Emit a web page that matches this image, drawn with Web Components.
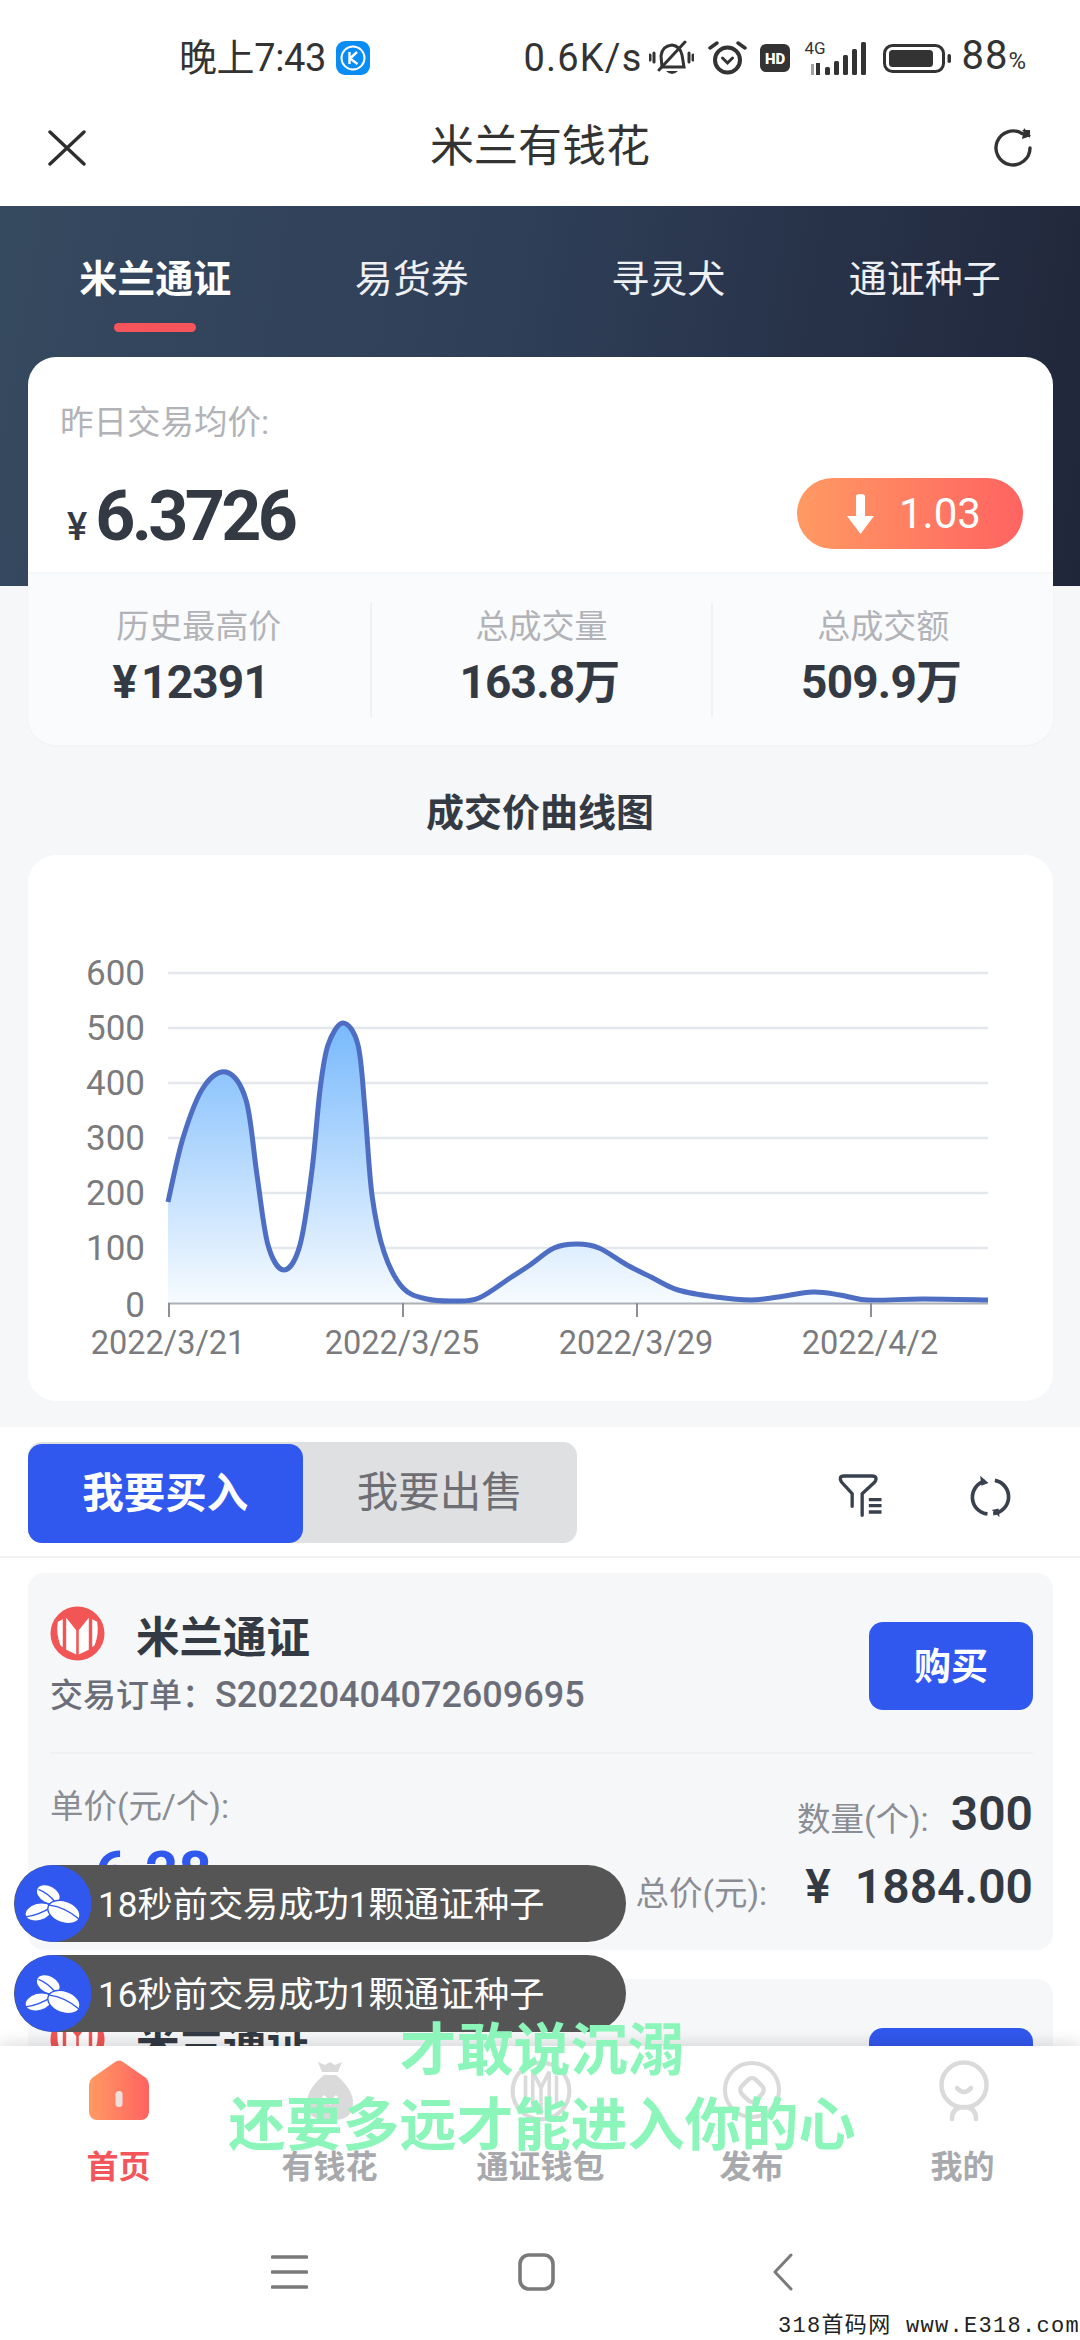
<!DOCTYPE html>
<html lang="zh-CN"><head><meta charset="utf-8"><title>米兰有钱花</title>
<style>
html,body{margin:0;padding:0}
body{width:1080px;height:2340px;overflow:hidden;position:relative;display:flex;flex-direction:column;background:#fff;font-family:Roboto,"Noto Sans CJK SC",sans-serif;color:#343a44}
</style></head><body>
<status-bar></status-bar>
<title-bar>米兰有钱花</title-bar>
<scroll-area>
  <market-tabs>
    <market-tab active>米兰通证</market-tab><market-tab>易货券</market-tab><market-tab>寻灵犬</market-tab><market-tab>通证种子</market-tab>
  </market-tabs>
  <price-card>
    <stat-cell shift><span slot="label">历史最高价</span><span slot="value">¥ 12391</span></stat-cell>
    <stat-cell divided><span slot="label">总成交量</span><span slot="value">163.8万</span></stat-cell>
    <stat-cell divided><span slot="label">总成交额</span><span slot="value">509.9万</span></stat-cell>
  </price-card>
  <section-title>成交价曲线图</section-title>
  <chart-card></chart-card>
  <trade-toolbar></trade-toolbar>
  <order-list>
    <order-card order="S20220404072609695" price="6.28" qty="300" total="1884.00"></order-card>
    <order-card order="S20220404072609695" price="6.28" qty="300" total="1884.00"></order-card>
  </order-list>
</scroll-area>
<tab-bar>
  <tab-item active label="首页" icon="home"></tab-item>
  <tab-item label="有钱花" icon="bag"></tab-item>
  <tab-item label="通证钱包" icon="milan"></tab-item>
  <tab-item label="发布" icon="publish"></tab-item>
  <tab-item label="我的" icon="me"></tab-item>
</tab-bar>
<nav-bar></nav-bar>
<toast-stack>
  <toast-pill>18秒前交易成功1颗通证种子</toast-pill>
  <toast-pill>16秒前交易成功1颗通证种子</toast-pill>
</toast-stack>
<lyric-mark><div>才敢说沉溺</div><div>还要多远才能进入你的心</div></lyric-mark>
<site-mark>318首码网 www.E318.com</site-mark>
<script>
const def=(name,css,html)=>customElements.define(name,class extends HTMLElement{
  constructor(){super();this.attachShadow({mode:'open'}).innerHTML=`<style>${css}</style>${typeof html==='function'?html(this):html}`;}
  connectedCallback(){
    if(typeof html==='function'&&!this._r){this._r=1;this.shadowRoot.innerHTML=`<style>${css}</style>${html(this)}`;}
  }
});
const logoStripes=`M20 28 L25 25.5 V54 L22.5 52 Q18 40 20 28Z M28.5 24 L38.7 36.7 V61.5 L28.5 56.5Z M41.3 36.7 L51.5 24 V56.5 L41.3 61.5Z M55 25.5 L60 28 Q62 40 57.5 52 L55 54Z`;
const bean=`<g stroke="#3158ee" stroke-width="1.4"><ellipse cx="37" cy="34" rx="13" ry="9" fill="#fff" transform="rotate(28 37 34)"/><path d="M27 29 Q37 33 44 42" fill="none"/>
<ellipse cx="27" cy="52" rx="14" ry="9" fill="#fff" transform="rotate(-15 27 52)"/><path d="M14 57 Q28 55 40 47" fill="none"/>
<ellipse cx="53" cy="52" rx="17" ry="11" fill="#fff" transform="rotate(20 53 52)"/><path d="M38 45 Q54 47 68 59" fill="none"/></g>`;

def('status-bar',`:host{display:flex;align-items:center;height:64px;padding:26px 53px 0 179px;box-sizing:content-box;color:#333;flex:none}
.t{font-size:38px;line-height:64px;letter-spacing:-.4px;white-space:nowrap}
.k{margin-left:10px;width:34px;height:34px}
.r{margin-left:auto;display:flex;align-items:center}
.s{font-size:38px;letter-spacing:1.2px;white-space:nowrap;line-height:64px}
svg{display:block;flex:none}
.p{font-size:40px;letter-spacing:1px;white-space:nowrap;margin-left:9px;line-height:64px}.p small{font-size:24px}
.g{font-size:17px;position:absolute;left:0;top:-4px;line-height:20px}
.sig{position:relative;width:65px;height:33px;margin-left:14px}`,
`<span class="t">晚上7:43</span>
<svg class="k" viewBox="0 0 34 34"><rect width="34" height="34" rx="9" fill="#0a8cf5"/><circle cx="17" cy="17" r="11.5" fill="none" stroke="#fff" stroke-width="2"/><path d="M13.5 11 V23 M21 11 L14 17.5 L21.5 23" fill="none" stroke="#fff" stroke-width="2.4"/></svg>
<div class="r"><span class="s">0.6K/s</span>
<svg style="margin-left:7px" width="45" height="36" viewBox="0 0 45 36"><g fill="none" stroke="#333" stroke-width="3" stroke-linecap="round"><path d="M13 27 L12 16 Q13 6 23 5 Q31 6 33 15 L35 27 Z"/><path d="M10 30 L36 2"/><path d="M5 13 V22 M1 15 V20 M40 13 V22 M44 15 V20"/></g><path d="M17 31 H29 Q23 37 17 31Z" fill="#333"/></svg>
<svg style="margin-left:14px" width="39" height="34" viewBox="0 0 39 34"><g fill="none" stroke="#333" stroke-linecap="round"><circle cx="19.5" cy="19" r="12.5" stroke-width="4"/><path d="M2 7 L9 2 M37 7 L30 2" stroke-width="3.4"/><path d="M14.5 17 L19.5 22 L24.5 17" stroke-width="3"/></g></svg>
<svg style="margin-left:13px" width="30" height="28" viewBox="0 0 30 28"><rect width="30" height="28" rx="6" fill="#333"/><text x="15" y="19.5" font-size="15" font-weight="900" text-anchor="middle" fill="#fff" font-family="Roboto">HD</text></svg>
<div class="sig"><span class="g">4G</span><svg width="65" height="33" viewBox="0 0 65 33"><g fill="#333"><rect x="7" y="22" width="3" height="11" opacity=".45"/><rect x="12" y="21" width="4" height="12"/><rect x="21" y="25" width="5" height="8" rx="1.5"/><rect x="30" y="19" width="5" height="14" rx="1.5"/><rect x="39" y="13" width="5" height="20" rx="1.5"/><rect x="48" y="7" width="5" height="26" rx="1.5"/><rect x="57" y="0" width="5" height="33" rx="1.5"/></g></svg></div>
<svg style="margin-left:14px" width="69" height="29" viewBox="0 0 69 29"><rect x="1.5" y="1.5" width="59" height="26" rx="8" fill="none" stroke="#333" stroke-width="3"/><rect x="6" y="6" width="44" height="17" rx="3.5" fill="#333"/><rect x="64.5" y="10" width="3.5" height="9" rx="1.7" fill="#333"/></svg>
<span class="p">88<small>%</small></span></div>`);

def('title-bar',`:host{display:flex;align-items:center;justify-content:center;position:relative;height:106px;padding-bottom:10px;font-size:44px;color:#333;flex:none;background:#fff}
svg{position:absolute;display:block}`,
`<svg style="left:48px;top:40px" width="38" height="36" viewBox="0 0 38 36"><path d="M2 2 L36 34 M36 2 L2 34" stroke="#2e2e2e" stroke-width="3.4" stroke-linecap="round"/></svg>
<slot></slot>
<svg style="left:994px;top:38px" width="40" height="40" viewBox="0 0 40 40"><path d="M36 20 A17 17 0 1 1 28 5.5" fill="none" stroke="#333" stroke-width="3.4" stroke-linecap="round"/><path d="M30 0 L37 8 L28 11 Z M28 2 L36 2 L36 10" fill="#333"/></svg>`);

def('scroll-area',`:host{display:block;flex:1;min-height:0;overflow:hidden;background:#f6f7f9}`,`<slot></slot>`);

def('market-tabs',`:host{display:grid;grid-template-columns:repeat(4,1fr);align-content:start;height:380px;box-sizing:border-box;padding:46px 27px 0;background:linear-gradient(100deg,#35495f 0%,#2f3f58 45%,#20263a 100%)}`,`<slot></slot>`);
def('market-tab',`:host{display:flex;flex-direction:column;align-items:center;color:#eef0f4;font-size:38px;line-height:54px}
:host([active]){color:#fff;font-weight:700}
i{display:block;width:82px;height:9px;border-radius:5px;margin-top:17px;background:transparent}
:host([active]) i{background:#f4545a}`,`<slot></slot><i></i>`);

def('price-card',`:host{display:block;margin:-229px 27px 0 28px;border-radius:28px;overflow:hidden;position:relative;background:#fff;box-shadow:0 1px 3px rgba(0,0,0,.03)}
.top{height:217px;box-sizing:border-box;padding:46px 30px 0 32px;border-bottom:2px solid #f6f7f9}
.lab{font-size:33.5px;line-height:40px;color:#b1b3b8}
.row{display:flex;align-items:center;justify-content:space-between;margin-top:35px;height:71px;padding-left:7px}
.price{display:flex;align-items:baseline;color:#343a44;padding-top:6px}
.price small{font-size:38px;margin-right:8px;font-weight:500}
.price b{font-size:70px;letter-spacing:-3.7px;font-weight:700;line-height:71px}
.badge{display:flex;align-items:center;width:226px;height:71px;box-sizing:border-box;padding-left:49px;border-radius:36px;background:linear-gradient(90deg,#ff9a63,#ff6361);color:#fff;font-size:42px}
.badge svg{margin-right:24px;display:block}
.stats{display:grid;grid-template-columns:repeat(3,1fr);background:#fafbfc;height:171px;box-sizing:border-box;padding-top:29px;align-items:start}`,
`<div class="top"><div class="lab">昨日交易均价:</div>
<div class="row"><div class="price"><small>¥</small><b>6.3726</b></div>
<div class="badge"><svg width="29" height="40" viewBox="0 0 29 40"><path d="M10 2 Q10 0 14.5 0 Q19 0 19 2 V22 H28 L14.5 40 L1 22 H10Z" fill="#fff"/></svg><span>1.03</span></div></div></div>
<div class="stats"><slot></slot></div>`);
def('stat-cell',`:host{display:flex;flex-direction:column;align-items:center;height:114px;box-sizing:border-box}
:host([divided]){border-left:2px solid #f0f1f3}
.l{font-size:33px;line-height:48px;color:#b1b3b8}
.v{font-size:46px;line-height:62px;font-weight:700;color:#343a44;letter-spacing:-.8px;padding-right:4px;white-space:nowrap}
:host([shift]) .v{padding-right:16px;word-spacing:-6px}`,
`<div class="l"><slot name="label"></slot></div><div class="v"><slot name="value"></slot></div>`);

def('section-title',`:host{display:block;text-align:center;font-size:38px;font-weight:700;line-height:50px;padding:43px 0 17px;color:#343a44}`,`<slot></slot>`);

def('chart-card',`:host{display:block;margin:0 27px 26px 28px;height:546px;border-radius:28px;background:#fff;overflow:hidden}
svg{display:block}text{font-family:Roboto,sans-serif;font-size:32.5px;fill:#7b7b7e}.y{font-size:35px}`,()=>{
  const pts=[[168,1202],[183,1138],[203,1088],[226,1072],[246,1100],[257,1175],[268,1245],[284,1270],[300,1245],[312,1170],[320,1090],[328,1045],[343,1023],[358,1045],[365,1110],[372,1195],[384,1252],[403,1288],[427,1299],[455,1301],[479,1298],[510,1278],[530,1265],[554,1248],[577,1244],[599,1248],[627,1265],[651,1277],[678,1290],[716,1297],[751,1300],[778,1297],[813,1292],[840,1295],[868,1300],[923,1299],[988,1300]];
  let d=`M${pts[0]}`;
  for(let i=0;i<pts.length-1;i++){
    const a=pts[Math.max(i-1,0)],b=pts[i],c=pts[i+1],e=pts[Math.min(i+2,pts.length-1)],k=6;
    d+=` C${b[0]+(c[0]-a[0])/k} ${b[1]+(c[1]-a[1])/k} ${c[0]-(e[0]-b[0])/k} ${c[1]-(e[1]-b[1])/k} ${c[0]} ${c[1]}`;
  }
  const ys=[[600,973],[500,1028],[400,1083],[300,1138],[200,1193],[100,1248]];
  return `<svg width="1025" height="546" viewBox="28 855 1025 546">
  <defs><linearGradient id="f" gradientUnits="userSpaceOnUse" x1="0" y1="1023" x2="0" y2="1303"><stop offset="0" stop-color="#78b9fc"/><stop offset="1" stop-color="#f7fbff"/></linearGradient></defs>
  ${ys.map(([v,y])=>`<line x1="168" x2="988" y1="${y}" y2="${y}" stroke="#e4e8ed" stroke-width="2.5"/><text class="y" x="145" y="${y+12}" text-anchor="end">${v}</text>`).join('')}
  <text class="y" x="145" y="1317" text-anchor="end">0</text>
  <path d="${d} L988 1303 L168 1303Z" fill="url(#f)"/>
  <line x1="168" x2="988" y1="1303.5" y2="1303.5" stroke="#adb0b4" stroke-width="2"/>
  ${[169,403,637,871].map(x=>`<line x1="${x}" x2="${x}" y1="1303" y2="1317" stroke="#8d9096" stroke-width="2"/>`).join('')}
  <path d="${d}" fill="none" stroke="#4e6ec3" stroke-width="5" stroke-linejoin="round"/>
  <text x="168" y="1354" text-anchor="middle">2022/3/21</text><text x="402" y="1354" text-anchor="middle">2022/3/25</text><text x="636" y="1354" text-anchor="middle">2022/3/29</text><text x="870" y="1354" text-anchor="middle">2022/4/2</text>
  </svg>`;});

def('trade-toolbar',`:host{display:flex;align-items:flex-start;background:#fff;height:131px;box-sizing:border-box;padding:15px 69px 0 28px;border-bottom:2px solid #f1f2f4}
.tg{display:flex;align-items:flex-end;width:549px;height:101px;background:#dfe0e2;border-radius:14px;font-size:41.5px}
.a,.b{display:flex;align-items:center;justify-content:center;width:275px;height:99px;box-sizing:border-box;padding-bottom:7px}
.a{background:#3158ee;color:#fff;font-weight:700;border-radius:14px}
.b{color:#6e6f74;height:101px}
.ic{margin-left:auto;display:flex;gap:85px;align-items:flex-start;padding-top:31px}
svg{display:block}`,
`<div class="tg"><div class="a">我要买入</div><div class="b">我要出售</div></div>
<div class="ic"><svg width="47" height="45" viewBox="55 38 140 135"><path d="M100 138 V100 L68 65 Q58 48 75 47 H160 Q178 48 168 65 L130 100 V165" fill="none" stroke="#38414d" stroke-width="10" stroke-linecap="round" stroke-linejoin="round"/><path d="M150 118 H188 M150 136 H188 M150 155 H188" stroke="#38414d" stroke-width="10"/></svg>
<svg width="42" height="47" viewBox="450 40 125 140"><g fill="none" stroke="#38414d" stroke-width="11"><path d="M497 64 A50 50 0 0 0 505 162"/><path d="M527 62 A50 50 0 0 1 522 161"/></g><path d="M483 48 L508 70 L487 78Z M541 172 L518 150 L538 146Z" fill="#38414d"/></svg></div>`);

def('order-list',`:host{display:flex;flex-direction:column;gap:29px;background:#fff;padding:15px 27px 0 28px}`,`<slot></slot>`);
def('order-card',`:host{display:block;flex:none;height:377px;background:#f6f7f9;border-radius:16px;padding:0 20px 0 22px;box-sizing:border-box}
.head{display:flex;justify-content:space-between;align-items:flex-start;height:179px;border-bottom:2px solid #f0f1f3;box-sizing:content-box}
.n{display:flex;align-items:flex-start;margin-top:33px}
.n svg{display:block;width:55px;height:55px;flex:none}
.n b{margin:8px 0 0 31px;font-size:43.5px;line-height:50px;color:#343a44}
.o{margin-top:9px;font-size:36px;line-height:44px;font-weight:500;color:#6b6e78;white-space:nowrap}
.o span{font-size:33px}
.btn{margin-top:49px;width:164px;height:88px;box-sizing:border-box;padding-bottom:4px;border-radius:14px;background:#3158ee;color:#fff;font-size:37px;font-weight:700;display:flex;align-items:center;justify-content:center}
.body{display:flex;justify-content:space-between;padding-top:22px}
.up{font-size:33.5px;line-height:44px;color:#8b8d94;margin-top:9px}
.pr{display:flex;align-items:baseline;color:#3158ee;font-weight:700;font-size:58px;line-height:70px;margin-top:8px}
.pr small{font-size:30px;width:45px}
.rt{display:flex;flex-direction:column;align-items:flex-end;padding-top:6px}
.q{display:flex;align-items:center;height:62px;margin-top:0}
.q span{font-size:33.5px;color:#8b8d94;margin:6px 22px 0 0}
.q b{font-size:48px;font-weight:600;color:#343a44}
.q+.q{margin-top:11px}.q+.q span{margin:8px 38px 0 0}
.q i{font-style:normal;font-size:48px;font-weight:600;margin-right:24px;color:#343a44}`,
h=>`<div class="head"><div><div class="n"><svg viewBox="12 12 56 56"><circle cx="40" cy="40" r="27.5" fill="#f25555"/><path fill="#fff" d="${logoStripes}"/></svg><b>米兰通证</b></div>
<div class="o"><span>交易订单&#xFF1A;</span>${h.getAttribute('order')||''}</div></div><div class="btn">购买</div></div>
<div class="body"><div><div class="up">单价(元/个):</div><div class="pr"><small>¥</small>${h.getAttribute('price')||''}</div></div>
<div class="rt"><div class="q"><span>数量(个):</span><b>${h.getAttribute('qty')||''}</b></div>
<div class="q"><span>总价(元):</span><i>¥</i><b>${h.getAttribute('total')||''}</b></div></div></div>`);

const tabIcons={
home:`<svg width="64" height="62" viewBox="-2 0 64 62"><defs><linearGradient id="h" x1="0" x2="1" y1="0" y2="0"><stop offset="0" stop-color="#ff9a63"/><stop offset="1" stop-color="#ff6361"/></linearGradient></defs><path d="M26 2 a6 6 0 0 1 8 0 L57 18 q3 3 3 7 V52 a8 8 0 0 1-8 8 H8 a8 8 0 0 1-8-8 V25 q0-4 3-7Z" fill="url(#h)"/><rect x="26.5" y="31" width="7" height="16" rx="3.5" fill="#f0e0dc"/></svg>`,
bag:`<svg width="64" height="62" viewBox="0 0 64 62"><path d="M20 2 L27 5 L32 2 L37 5 L44 2 L40 12 H24Z" fill="#dadada"/><path d="M26 15 H38 Q56 30 55 44 Q54 60 36 60 H28 Q10 60 9 44 Q8 30 26 15Z" fill="#dadada"/><path d="M25 36 L32 43 L39 36" fill="none" stroke="#fff" stroke-width="3"/></svg>`,
milan:`<svg width="64" height="62" viewBox="9 9 62 60"><circle cx="40" cy="39" r="27.5" fill="none" stroke="#dadada" stroke-width="4"/><path d="M25 24 V52 M32 20 V58 M40 36 V62 M48 20 V58 M55 24 V52 M32 20 L40 36 L48 20" fill="none" stroke="#dadada" stroke-width="3.5"/></svg>`,
publish:`<svg width="64" height="62" viewBox="0 0 64 62"><g fill="none" stroke="#dadada"><circle cx="32" cy="30" r="27" stroke-width="4"/><rect x="22" y="20" width="20" height="20" rx="6" stroke-width="4.5" transform="rotate(45 32 30)"/></g></svg>`,
me:`<svg width="64" height="62" viewBox="0 0 64 62"><g fill="none" stroke="#dadada" stroke-width="4.5" stroke-linecap="round"><circle cx="33" cy="25" r="22.5"/><path d="M26 28 Q33 36 40 28"/><path d="M21 59 Q21 47 33 47 Q45 47 45 59"/></g></svg>`};
def('tab-bar',`:host{display:grid;grid-template-columns:repeat(5,211px);padding:14px 13px 0;height:187px;box-sizing:border-box;background:#fff;flex:none;position:relative;box-shadow:0 -4px 14px rgba(0,0,0,.12)}`,`<slot></slot>`);
def('tab-item',`:host{display:flex;flex-direction:column;align-items:center;color:#a8a9ad;font-size:32px;font-weight:700}
:host([active]){color:#f2565a}
svg{display:block}.l{margin-top:25px;line-height:40px}`,
h=>`${tabIcons[h.getAttribute('icon')]||''}<div class="l">${h.getAttribute('label')||''}</div>`);

def('nav-bar',`:host{display:flex;align-items:flex-start;height:107px;box-sizing:border-box;padding:20px 0 0 271px;background:#fff;flex:none;position:relative}
svg{display:block}`,
`<svg width="37" height="38" viewBox="0 0 37 38"><path d="M1.5 4 H35.5 M1.5 19 H35.5 M1.5 34 H35.5" stroke="#7a7a7a" stroke-width="3.6" stroke-linecap="round"/></svg>
<svg style="margin-left:210px" width="37" height="38" viewBox="0 0 37 38"><rect x="2" y="2" width="33" height="34" rx="9" fill="none" stroke="#7a7a7a" stroke-width="3.6"/></svg>
<svg style="margin-left:218px" width="20" height="38" viewBox="0 0 20 38"><path d="M18 2 L2 19 L18 36" fill="none" stroke="#7a7a7a" stroke-width="3" stroke-linecap="round" stroke-linejoin="round"/></svg>`);

def('toast-stack',`:host{position:absolute;left:14px;top:1865px;display:flex;flex-direction:column;gap:13px}`,`<slot></slot>`);
def('toast-pill',`:host{display:flex;align-items:center;position:relative;width:612px;height:77px;box-sizing:border-box;padding:0 0 5px 84px;background:#555;border-radius:39px;color:#fff;font-size:35.2px;white-space:nowrap}
svg{position:absolute;left:0;top:0;display:block}`,
`<svg width="78" height="77" viewBox="0 0 78 77"><circle cx="39" cy="38.5" r="38.5" fill="#3158ee"/><g transform="translate(-2 -4) scale(.98)">${bean}</g></svg><slot></slot>`);

def('lyric-mark',`:host{position:absolute;left:4px;right:0;top:2013px;text-align:center;font-size:57px;line-height:75px;color:#8cf5ba;font-weight:700;pointer-events:none}`,`<slot></slot>`);
def('site-mark',`:host{position:absolute;right:0;bottom:0;height:26px;line-height:26px;font-family:"Liberation Mono","Noto Sans CJK SC",monospace;font-size:22px;letter-spacing:1.3px;color:#222;white-space:nowrap}`,`<slot></slot>`);
</script>
</body></html>
